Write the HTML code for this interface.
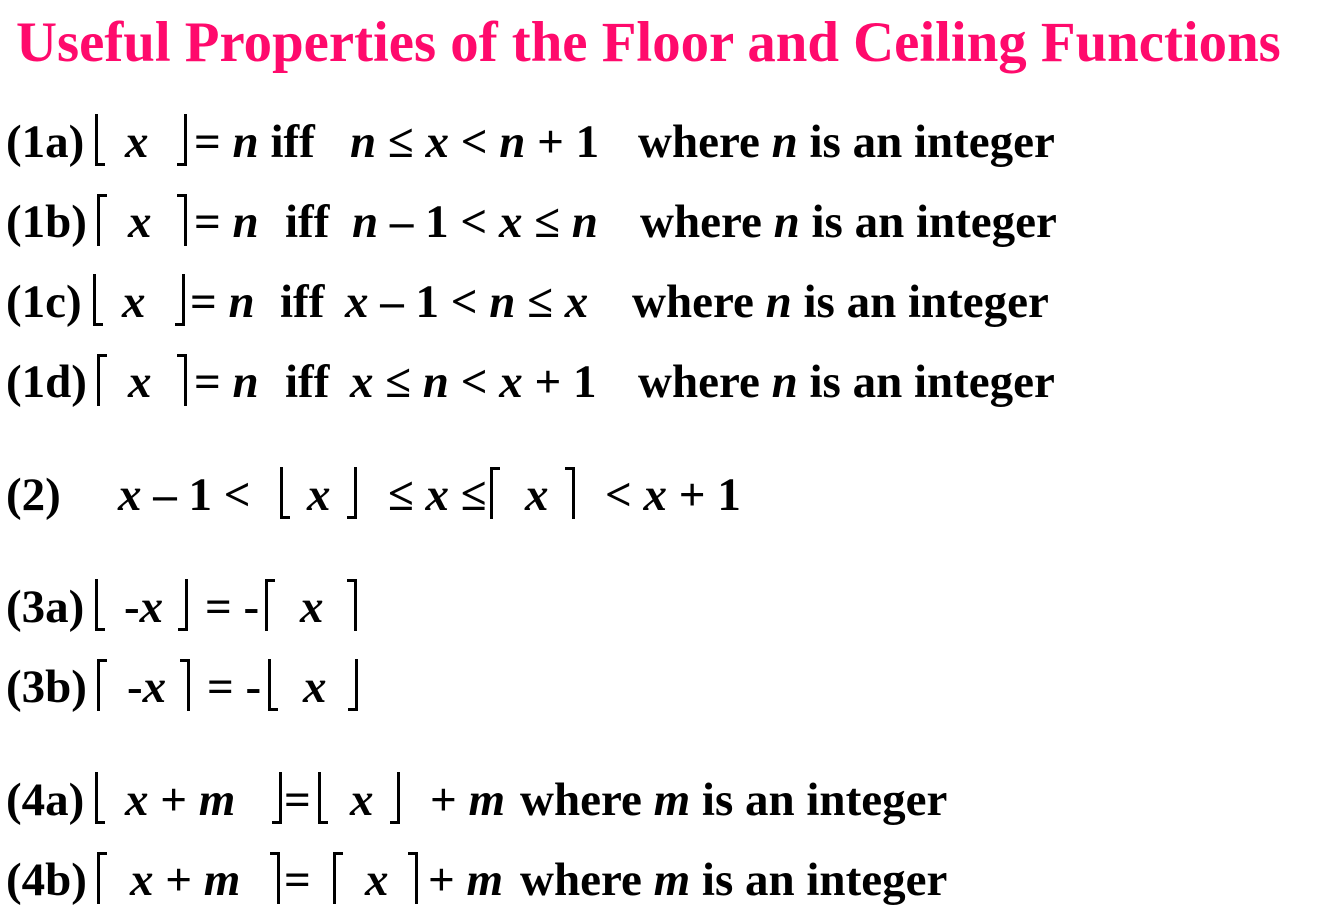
<!DOCTYPE html>
<html><head><meta charset="utf-8"><style>
html,body{margin:0;padding:0;background:#fff;width:1324px;height:908px;overflow:hidden}
body{position:relative;font-family:"Liberation Serif",serif;font-weight:bold;color:#000}
.t{position:absolute;left:16px;top:13px;font-size:56.8px;color:#ff0a6c;white-space:nowrap;line-height:60px}
.l{position:absolute;left:0;width:1324px;height:48px;font-size:47px;line-height:48px;white-space:nowrap}
.l span{position:absolute;top:0}
i{font-style:italic}
.l .fl,.l .fr,.l .cl,.l .cr{top:-4px;width:10px;height:52px;box-sizing:border-box;border:0 solid #000}
.fl{border-left-width:3px!important;border-bottom-width:3px!important}
.fr{border-right-width:3px!important;border-bottom-width:3px!important}
.cl{border-left-width:3px!important;border-top-width:3px!important}
.cr{border-right-width:3px!important;border-top-width:3px!important}
</style></head><body>
<div class="t">Useful Properties of the Floor and Ceiling Functions</div>

<div class="l" style="top:118px"><span style="left:6px">(1a)</span><span class="fl" style="left:95px"></span><span style="left:125px"><i>x</i></span><span class="fr" style="left:177px"></span><span style="left:194px">= <i>n</i> iff</span><span style="left:350px"><i>n</i> ≤ <i>x</i> &lt; <i>n</i> + 1</span><span style="left:638px">where <i>n</i> is an integer</span></div>

<div class="l" style="top:198px"><span style="left:6px">(1b)</span><span class="cl" style="left:97px"></span><span style="left:128px"><i>x</i></span><span class="cr" style="left:177px"></span><span style="left:194px">= <i>n</i></span><span style="left:285px">iff</span><span style="left:352px"><i>n</i> – 1 &lt; <i>x</i> ≤ <i>n</i></span><span style="left:640px">where <i>n</i> is an integer</span></div>

<div class="l" style="top:278px"><span style="left:6px">(1c)</span><span class="fl" style="left:93px"></span><span style="left:122px"><i>x</i></span><span class="fr" style="left:175px"></span><span style="left:190px">= <i>n</i></span><span style="left:280px">iff</span><span style="left:345px"><i>x</i> – 1 &lt; <i>n</i> ≤ <i>x</i></span><span style="left:632px">where <i>n</i> is an integer</span></div>

<div class="l" style="top:358px"><span style="left:6px">(1d)</span><span class="cl" style="left:97px"></span><span style="left:128px"><i>x</i></span><span class="cr" style="left:177px"></span><span style="left:194px">= <i>n</i></span><span style="left:285px">iff</span><span style="left:350px"><i>x</i> ≤ <i>n</i> &lt; <i>x</i> + 1</span><span style="left:638px">where <i>n</i> is an integer</span></div>

<div class="l" style="top:471px"><span style="left:6px">(2)</span><span style="left:118px"><i>x</i> – 1 &lt;</span><span class="fl" style="left:280px"></span><span style="left:307px"><i>x</i></span><span class="fr" style="left:347px"></span><span style="left:388px">≤ <i>x</i> ≤</span><span class="cl" style="left:490px"></span><span style="left:525px"><i>x</i></span><span class="cr" style="left:565px"></span><span style="left:605px">&lt; <i>x</i> + 1</span></div>

<div class="l" style="top:583px"><span style="left:6px">(3a)</span><span class="fl" style="left:95px"></span><span style="left:124px">-<i>x</i></span><span class="fr" style="left:178px"></span><span style="left:205px">= -</span><span class="cl" style="left:265px"></span><span style="left:300px"><i>x</i></span><span class="cr" style="left:347px"></span></div>

<div class="l" style="top:663px"><span style="left:6px">(3b)</span><span class="cl" style="left:97px"></span><span style="left:127px">-<i>x</i></span><span class="cr" style="left:180px"></span><span style="left:207px">= -</span><span class="fl" style="left:268px"></span><span style="left:303px"><i>x</i></span><span class="fr" style="left:348px"></span></div>

<div class="l" style="top:776px"><span style="left:6px">(4a)</span><span class="fl" style="left:95px"></span><span style="left:125px"><i>x</i> + <i>m</i></span><span class="fr" style="left:272px"></span><span style="left:284px">=</span><span class="fl" style="left:318px"></span><span style="left:350px"><i>x</i></span><span class="fr" style="left:390px"></span><span style="left:430px">+ <i>m</i></span><span style="left:520px">where <i>m</i> is an integer</span></div>

<div class="l" style="top:856px"><span style="left:6px">(4b)</span><span class="cl" style="left:97px"></span><span style="left:130px"><i>x</i> + <i>m</i></span><span class="cr" style="left:270px"></span><span style="left:284px">=</span><span class="cl" style="left:333px"></span><span style="left:365px"><i>x</i></span><span class="cr" style="left:408px"></span><span style="left:428px">+ <i>m</i></span><span style="left:520px">where <i>m</i> is an integer</span></div>
</body></html>
